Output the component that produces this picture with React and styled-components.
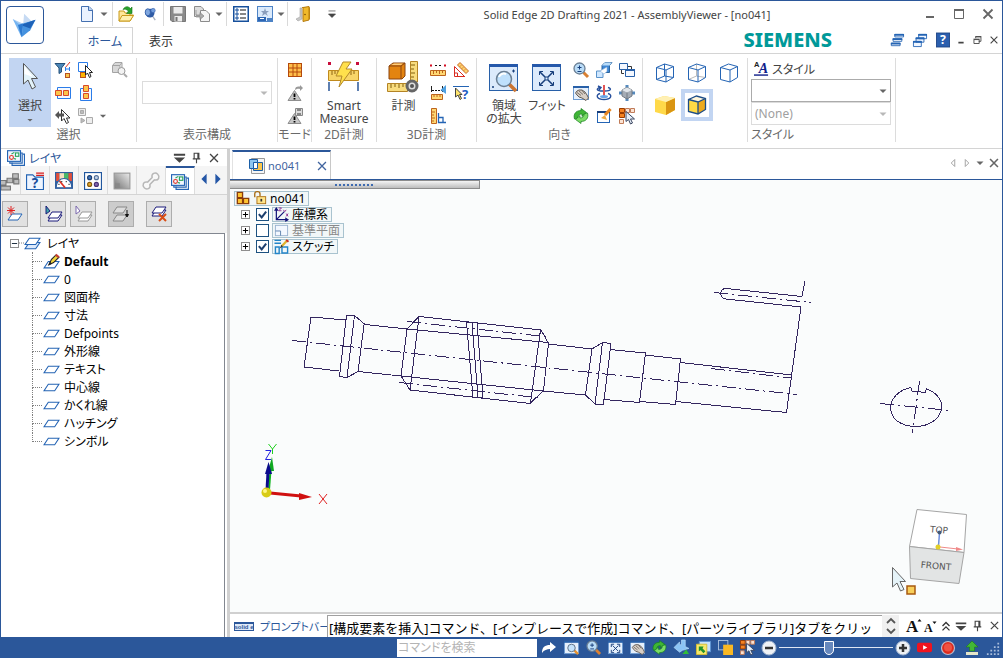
import { useState } from "react";
import styled, { createGlobalStyle, css } from "styled-components";

const GlobalStyle = createGlobalStyle`
*, *::before, *::after {
    box-sizing: border-box;
}
body {
    margin: 0;
    background: #fff;
}
body, button, input, select {
    font-family: "Noto Sans", "Noto Sans CJK JP", sans-serif;
    font-size: 12px;
    color: #444;
}
button {
    background: none;
    border: 0;
    padding: 0;
    font-feature-settings: inherit;
    cursor: pointer;
}
svg {
    display: block;
    flex: none;
    overflow: visible;
}
`;

const Window = styled.div`
display: flex;
flex-direction: column;
height: 100vh;
border: 1px solid #2b579a;
border-bottom: 0;
overflow: hidden;
font-feature-settings: "palt";
`;

const Header = styled.header`
display: flex;
flex: none;
height: 53px;
border-bottom: 1px solid #d4d4d4;
`;

const AppButton = styled.button`
flex: none;
display: flex;
align-items: center;
justify-content: center;
width: 38px;
height: 38px;
margin: 5px 33px 0 5px;
border: 1px solid #2b579a;
border-radius: 4px;
`;

const HeaderRows = styled.div`
flex: 1;
min-width: 0;
display: flex;
flex-direction: column;
`;

const TitleRow = styled.div`
display: flex;
align-items: center;
height: 27px;
`;

const Title = styled.h1`
flex: 1;
margin: 0;
padding-right: 8px;
text-align: center;
font: 400 11px "Noto Sans", sans-serif;
white-space: nowrap;
`;

const TabRow = styled.div`
display: flex;
align-items: center;
height: 26px;
`;

const RibbonTab = styled.button`
width: 56px;
height: 26px;
color: #333;
border: 1px solid transparent;
border-bottom: 0;
${p => p.$active && css`
    color: #2b579a;
    background: #fff;
    border-color: #d4d4d4;
`}
`;

const Brand = styled.div`
margin-left: auto;
margin-right: 53px;
font: 800 20px/24px "Noto Sans", sans-serif;
color: #009999;
`;

// a flat icon button, only the width differs from place to place
const Slot = styled.button`
flex: none;
display: flex;
align-items: center;
justify-content: center;
width: ${p => p.$w || 23}px;
height: ${p => p.$h || 23}px;
`;

const Divider = styled.span`
flex: none;
width: 1px;
height: 24px;
margin: 0 1px;
background: #d9d9d9;
`;

const Ribbon = styled.div`
flex: none;
display: flex;
height: 95px;
padding: 4px 0 6px;
border-bottom: 1px solid #d4d4d4;
`;

const Group = styled.section`
flex: none;
display: flex;
flex-direction: column;
width: ${p => p.$w}px;
padding-left: ${p => p.$pad || 0}px;
border-right: 1px solid #dcdcdc;
`;

const GroupBody = styled.div`
display: flex;
justify-content: ${p => p.$center ? "center" : "flex-start"};
align-items: ${p => p.$center ? "center" : "stretch"};
height: 69px;
`;

const GroupLabel = styled.div`
height: 15px;
margin-left: -${p => p.$pull || 0}px;
line-height: 15px;
text-align: ${p => p.$left ? "left" : "center"};
white-space: nowrap;
color: #6a6a6a;
`;

const BigButton = styled.button`
display: flex;
flex-direction: column;
align-items: center;
width: ${p => p.$w}px;
height: 69px;
padding-top: 2px;
line-height: 13px;
white-space: nowrap;
background: ${p => p.$on ? "#c2d5f2" : "none"};
span {
    margin-top: 5px;
}
span + svg {
    margin-top: 2px;
}
`;

const IconGrid = styled.div`
display: grid;
grid-template-columns: ${p => p.$cols};
grid-auto-rows: 23px;
`;

const ViewGrid = styled.div`
display: grid;
grid-template-columns: repeat(3, 32px);
grid-template-rows: 30px 34px;
align-items: center;
`;

const ViewButton = styled(Slot)`
width: 32px;
height: 32px;
border: ${p => p.$on ? "4px solid #c2d5f2" : "0"};
`;

const StyleColumn = styled.div`
display: flex;
flex-direction: column;
width: 140px;
`;

const StyleName = styled.div`
display: flex;
align-items: center;
gap: 3px;
height: 21px;
padding-left: 3px;
`;

const Combo = styled.div`
display: grid;
width: ${p => p.$w}px;
height: 23px;
select, svg {
    grid-area: 1 / 1;
}
select {
    appearance: none;
    width: 100%;
    height: 23px;
    padding: 0 3px;
    border: 1px solid ${p => p.$dim ? "#dcdcdc" : "#ababab"};
    border-radius: 0;
    background: #fff;
    color: ${p => p.$dim ? "#a0a0a0" : "#333"};
    opacity: 1;
}
svg {
    place-self: center end;
    pointer-events: none;
}
`;

const Workspace = styled.div`
flex: 1;
min-height: 0;
display: flex;
`;

const SidePanel = styled.aside`
flex: none;
display: flex;
flex-direction: column;
width: 229px;
border-right: 3px solid #d0d0d0;
`;

const PanelTitle = styled.div`
display: flex;
align-items: center;
height: 17px;
padding: 0 5px 0 6px;
color: #2b579a;
b {
    flex: 1;
    margin-left: 4px;
    font-weight: 400;
}
`;

const PanelTabs = styled.div`
display: flex;
height: 29px;
border-bottom: 1px solid #d4d4d4;
background: #f5f5f5;
overflow: hidden;
`;

const PanelTab = styled(Slot)`
width: 29px;
height: 29px;
border-right: 1px solid #dcdcdc;
${p => p.$first && css`
    width: 20px;
`}
${p => p.$active && css`
    background: #fff;
    border-top: 2px solid #2b579a;
`}
`;

const PanelTools = styled.div`
display: flex;
align-items: center;
height: 38px;
padding: 0 1px;
background: #f0f0f0;
`;

const ToolButton = styled(Slot)`
width: 26px;
height: 26px;
margin-right: ${p => p.$gap}px;
border: 1px solid #adadad;
background: ${p => p.$off ? "#cccccc" : "#e1e1e1"};
`;

const Tree = styled.ul`
flex: 1;
margin: 0 2px 0 0;
padding: 0 0 0 9px;
list-style: none;
border: 1px solid #828790;
border-bottom: 0;
border-left: 0;
color: #000;
ul {
    margin: 0;
    padding: 0 0 0 22px;
    list-style: none;
}
`;

const TreeRow = styled.div`
display: flex;
align-items: center;
height: 18px;
svg + svg {
    margin-right: 6px;
}
`;

const TreeLeaf = styled.li`
display: flex;
align-items: center;
height: 18px;
font-weight: ${p => p.$bold ? 700 : 400};
&::before {
    content: "";
    align-self: flex-start;
    width: 10px;
    height: 10px;
    margin-right: 1px;
    border: 0 dotted #808080;
    border-width: 0 0 1px 1px;
}
&:not(:last-child) {
    background: repeating-linear-gradient(#808080 0 1px, #fff 1px 2px) no-repeat 0 100% / 1px 8px;
}
svg {
    margin-right: 4px;
}
`;

const Main = styled.main`
flex: 1;
min-width: 0;
display: flex;
flex-direction: column;
`;

const DocTabs = styled.div`
display: flex;
align-items: flex-end;
height: 31px;
padding-left: 2px;
border-bottom: 1px solid #2b579a;
`;

const DocTab = styled.div`
display: flex;
align-items: center;
width: 99px;
height: 29px;
padding: 0 1px 0 16px;
border-top: 2px solid #2b579a;
border-right: 1px solid #c8c8c8;
border-left: 1px solid #e2e2e2;
font-size: 11px;
color: #41649f;
span {
    flex: 1;
    margin-left: 3px;
}
`;

const DocTools = styled.div`
display: flex;
align-items: center;
height: 29px;
margin-left: auto;
padding-bottom: 4px;
`;

const Canvas = styled.div`
position: relative;
flex: 1;
min-height: 0;
overflow: hidden;
background: #fafcfc;
border-bottom: 2px solid #d0d0d0;
`;

const Scene = styled.svg`
position: absolute;
left: 0;
top: 0;
`;

const Splitter = styled.div`
position: relative;
display: flex;
align-items: center;
justify-content: center;
width: 250px;
height: 9px;
border: 1px solid #8c8c8c;
border-left: 0;
background: linear-gradient(#f4f4f4, #bdbdbd);
`;

const PathFinder = styled.div`
position: relative;
padding: 1px 4px;
color: #000;
`;

const PathRow = styled.div`
display: flex;
align-items: center;
height: 16px;
padding-left: ${p => p.$root ? 0 : 7}px;
`;

const Check = styled.span`
display: grid;
margin: 0 3px 0 6px;
input, svg {
    grid-area: 1 / 1;
}
input {
    appearance: none;
    width: 13px;
    height: 13px;
    margin: 0;
    border: 1px solid #1c5180;
    background: #fff;
}
svg {
    pointer-events: none;
}
`;

const PathLabel = styled.label`
display: flex;
align-items: center;
gap: 3px;
height: 15px;
padding: 0 3px 0 1px;
border: 1px solid #a9c3cf;
background: #f2f7f8;
color: ${p => p.$off ? "#8a8a8a" : "#000"};
white-space: nowrap;
`;

const Expander = styled.button`
display: flex;
align-items: center;
justify-content: center;
width: 9px;
height: 9px;
border: 1px solid #8e8e8e;
background: #fff;
`;

const PromptBar = styled.div`
flex: none;
display: flex;
align-items: center;
height: 23px;
padding-left: 4px;
color: #2b579a;
label {
    flex: none;
    width: 67px;
    margin-left: 5px;
    font-size: 11px;
    white-space: nowrap;
}
`;

const PromptText = styled.input`
flex: 1;
min-width: 0;
height: 22px;
padding: 3px 1px 0;
border: 1px solid #a0a0a0;
border-right: 0;
border-bottom: 0;
background: #fff;
font-size: 13px;
color: #000;
`;

const Spinner = styled(Slot)`
width: 17px;
height: 22px;
background: #f0f0f0;
margin-right: 6px;
`;

const StatusBar = styled.footer`
flex: none;
display: flex;
align-items: center;
justify-content: flex-end;
height: 21px;
background: #2b579a;
`;

const Search = styled.input`
width: 140px;
height: 18px;
padding: 0 1px;
border: 0;
font-feature-settings: inherit;
&::placeholder {
    color: #b4b4b4;
    opacity: 1;
}
`;

const Zoom = styled.input`
appearance: none;
width: 114px;
height: 18px;
margin: 0;
background: linear-gradient(#dfe7f3, #dfe7f3) center / 100% 1px no-repeat;
&::-webkit-slider-thumb {
    appearance: none;
    width: 10px;
    height: 14px;
    border: 1px solid #fff;
    border-radius: 0 0 5px 5px;
    background: #6688bd;
}
`;

const blue = "#2464b4";
const navy = "#1b1b7a";
const gold = "#fbc54b";

const sheet = (x, y, fill = "#fff", stroke = blue) => (
    <path d={`M${x + 4} ${y}H${x + 14}L${x + 10} ${y + 6}H${x}Z`} fill={fill} stroke={stroke}/>
);
const lens = (
    <>
        <path d="M10.500 10.500L15 15" stroke="#d98033" strokeWidth="3"/>
        <circle cx="6.500" cy="6.500" r="5.500" fill="#b9dcf8" stroke="#6b7f94" strokeWidth="1.300"/>
    </>
);
const pageFrame = (
    <>
        <rect x=".5" y="1.500" width="15" height="13" fill="#e6f0fc" stroke="#6f9cd2"/>
        <path d="M0 2H16" stroke="#2860a8" strokeWidth="2"/>
    </>
);
const layers = (
    <>
        <path d="M4.500 12V14.500H15.500V4.500H14" fill="none" stroke={blue}/>
        <path d="M2.500 11V12.500H13.500V3.500H12" fill="none" stroke={blue}/>
        <rect x=".5" y="1.500" width="11.500" height="9.500" fill="#f1f7ff" stroke={blue}/>
        <circle cx="4" cy="7.500" r="1.700" fill="none" stroke="#e0382b"/>
        <rect x="7.500" y="3.500" width="3" height="3" fill="none" stroke="#2aa35a"/>
        <path d="M4 4.500L6.500 3M6 8.500L8 9" stroke="#2aa35a"/>
    </>
);
const warn = <path d="M7.500 5.500L14 15.500H1Z" fill="#c6c6c6" stroke="#8e8e8e"/>;
const bang = <path d="M7.500 8.500V12M7.500 13V14.500" stroke="#000" strokeWidth="1.800"/>;
const cubeLines = "M1.500 4.500L9.500 1 18.500 3.500V14.500L11 19 1.500 16.500ZM1.500 4.500L11 7 18.500 3.500M11 7V19";

// 16 x 16 drawings, the big ribbon ones use their own box
const art = {
    doc: <><path d="M2.500 .5H10L13.500 4V15.500H2.500Z" fill="#eaf2ff" stroke="#4470b0"/><path d="M9.500 .5V4.500H13.500" fill="#bcd3f2" stroke="#4470b0"/></>,
    caret: <path d="M4.500 6.500H11.500L8 10Z" fill="#666"/>,
    caretDim: <path d="M4.500 6.500H11.500L8 10Z" fill="#b8b8b8"/>,
    overflow: <path d="M4 4.500H12M4 8H12L8 12Z" fill="#444" stroke="#444" strokeWidth=".8"/>,
    open: <><path d="M1 15V5H6L7 7H12V9H15.500L12 15Z" fill="#ffe79a" stroke="#c99a1b"/><path d="M1 15L4 9.500H15.500L12 15Z" fill="#fff0b0" stroke="#c99a1b"/><path d="M5 3.500C7 0 10 0 12.500 2.500L14 1V7.500H8.500L10.500 5C8 3 7 3 5 3.500Z" fill="#27a22c" stroke="#147418" strokeWidth=".6"/></>,
    pinBlue: <><path d="M10 9L14 15" stroke="#a8b2c2" strokeWidth="1.500"/><circle cx="8" cy="7" r="5" fill="#2f5ba5"/><ellipse cx="5.500" cy="6" rx="3" ry="4" fill="#7fa6de" stroke="#2f5ba5"/><circle cx="11.500" cy="4" r="2.500" fill="#6f9bdb" stroke="#2f5ba5" strokeWidth=".6"/></>,
    save: <><path d="M.5 .5H15.500V15.500H2L.5 14Z" fill="#8b8b8b" stroke="#777"/><path d="M3.500 1H12.500V7.500H3.500ZM4.500 10H12V15.500H4.500Z" fill="#ececec"/><path d="M6.500 11V15" stroke="#777" strokeWidth="2"/></>,
    copy: <><path d="M.5 .5H7L9.500 3V10.500H.5Z" fill="#ddd" stroke="#8b8b8b"/><path d="M6.500 4.500H12L15.500 8V15.500H6.500Z" fill="#f4f4f4" stroke="#8b8b8b"/><path d="M2 4V9H6V6.500L10 10 6 13.500V11H2" fill="#aaa" stroke="#777" strokeWidth=".6"/></>,
    list: <><rect x=".75" y=".75" width="14.500" height="14.500" fill="#fff" stroke="#17509c" strokeWidth="1.500"/><path d="M7 4H13M7 8H13M7 12H13" stroke="#111"/><path d="M3 3H5V5H3ZM3 7H5V9H3ZM3 11H5V13H3Z" fill="#fff" stroke="#17509c"/></>,
    picture: <><rect x=".5" y=".5" width="15" height="15" fill="#dbeafb" stroke="#4d83c6"/><path d="M8 2L9 5H12L9.500 7 11 10 8 8 5 10 6 7 4 5H7Z" fill="#8b9ebc"/><path d="M1 11H9V15H1Z" fill="#2d66b4"/><path d="M3 12.500H7M11 13H14" stroke="#fff"/><path d="M10 12H15V15H10Z" fill="#4d83c6"/></>,
    door: <><path d="M1 13L5 11V2H7V13L3 15Z" fill="#c8c8c8" stroke="#a1a1a1" strokeWidth=".6"/><path d="M7 1.500H14.500V13H12" fill="#fff" stroke="#c58c12"/><path d="M8 1.500L14 .5V14L8 15.500Z" fill="#f0b92b" stroke="#b57b10"/><circle cx="10" cy="8.500" r=".8" fill="#7a4c00"/></>,
    min: <path d="M4 11H12" stroke="#666" strokeWidth="2"/>,
    max: <><path d="M3.500 3.500H12.500V12.500H3.500Z" fill="none" stroke="#666"/><path d="M3 4H13" stroke="#666" strokeWidth="2"/></>,
    close: <path d="M3.500 3.500L12.500 12.500M12.500 3.500L3.500 12.500" stroke="#666" strokeWidth="1.800"/>,
    closeSm: <path d="M3.500 3.500L12.500 12.500M12.500 3.500L3.500 12.500" stroke="#444" strokeWidth="1.500"/>,
    closeTab: <path d="M3.500 3.500L12.500 12.500M12.500 3.500L3.500 12.500" stroke="#41649f" strokeWidth="1.500"/>,
    minSm: <path d="M5 11H11" stroke="#444" strokeWidth="2"/>,
    restore: <path d="M6.500 6V4.500H12.500V9.500H10M4.500 7.500H10.500V12H4.500ZM4 7H11M6 4H13" fill="none" stroke="#444"/>,
    cascade: <><path d="M5.500 1.500H15.500V4.500H5.500ZM3.500 6.500H13.500V9.500H3.500ZM1.500 11.500H11.500V14.500H1.500Z" fill="#fff" stroke={blue}/><path d="M5 2H16M3 7H14M1 12H12" stroke={blue} strokeWidth="2"/></>,
    windows: <><path d="M6.500 1.500H15.500V6.500H6.500ZM3.500 5.500H12.500V10.500H3.500ZM.5 9.500H9.500V15.500H.5Z" fill="#f0f6ff" stroke={blue}/><path d="M6 2H16M3 6H13M0 10H10" stroke={blue} strokeWidth="2"/></>,
    help: <><rect x=".5" y="0" width="15" height="16" fill="#2b5fae" stroke="#1d4485"/><text x="8" y="13" textAnchor="middle" fontFamily="Noto Sans" fontWeight="700" fontSize="14" fill="#fff">?</text></>,
    filter: <><path d="M0 1.500H10L6.500 6V10L4 11.500V6Z" fill="#4b87b9" stroke="#27517a"/><path d="M10 6L15 0" stroke="#df3324"/><path d="M10.500 5V9M14.500 5V9M10.500 7H14.500" stroke="#2b7ce9"/><rect x="10.500" y="11.500" width="4" height="4" fill={gold} stroke="#b75323"/></>,
    pickBox: <><path d="M.5 .5H9.500V9.500H.5Z" fill="#fff" stroke="#2b7ce9"/><rect x="2.500" y="10.500" width="5" height="5" fill="#ffb400" stroke="#b75323"/><path d="M7.500 3.500V13L9.500 11 11.500 15.500 13 14.500 11.500 10.500H14.500Z" fill="#fff" stroke="#222"/></>,
    boxesH: <><path d="M2.500 2.500H15.500V13.500H2.500Z" fill="#f5f9ff" stroke="#2b7ce9"/><path d="M.5 5.500H6.500V10.500H.5ZM8.500 5.500H13.500V10.500H8.500Z" fill={gold} stroke="#d8492b"/></>,
    boxesV: <><path d="M2.500 3.500H13.500V15.500H2.500Z" fill="#f5f9ff" stroke="#2b7ce9"/><path d="M5.500 .5H10.500V6.500H5.500ZM5.500 8.500H10.500V13.500H5.500Z" fill={gold} stroke="#d8492b"/></>,
    pickBack: <><path d="M6.500 1.500V13L9 10.500 11.500 15.500 13.500 14.500 11.500 10H15Z" fill="#fff" stroke="#333"/><path d="M0 7L4 3V5.500H9V8.500H4V11Z" fill="#555"/></>,
    chain: <><path d="M.5 .5H7.500V7.500H.5ZM8.500 9.500H14.500V15.500H8.500Z" fill="#eee" stroke="#aaa"/><path d="M2.500 2.500H5.500V5.500H2.500ZM3 10L7 12.500 3 15Z" fill="#bbb" stroke="#aaa"/></>,
    findPart: <><path d="M.5 3.500L3 .5H10L8 3.500V10.500H.5ZM.5 3.500H8M8 10L10 8V1" fill="#d8d8d8" stroke="#a4a4a4"/><circle cx="9.500" cy="9" r="3.500" fill="#f3f3f3" stroke="#999"/><path d="M12 12L15 15" stroke="#aaa" strokeWidth="2"/></>,
    gridRed: <><rect x="1.500" y="1.500" width="13" height="13" fill="#ffbd4a" stroke="#b4490d"/><path d="M1 6H15M1 10H15M6 1V15M10 1V15" stroke="#b4490d"/></>,
    warnArrow: <>{warn}{bang}<path d="M8 5C8 2 10 1 13 1.500V0L16 3 13 6V4C11 3.500 10 4 8 5Z" fill="#999"/></>,
    warnSave: <>{warn}{bang}<path d="M8.500 .5H15.500V7.500H8.500Z" fill="#ddd" stroke="#888"/><path d="M10 5H14V7H10ZM10 1H14V3H10Z" fill="#888"/></>,
    rulerDots: <><path d="M.5 8.500H15.500V13.500H.5Z" fill="#ffd873" stroke="#bd641d"/><path d="M3.500 9V12M6.500 9V11M9.500 9V12M12.500 9V11" stroke="#bd641d"/><path d="M0 3.500H2M14 3.500H16" stroke="#d60d22" strokeWidth="2"/><path d="M5 3.500H7M9 3.500H11" stroke="#111"/></>,
    angle: <><path d="M4.500 3L7 .5 15.500 9 13 11.500Z" fill="#ffd26e" stroke="#c76a25"/><path d="M7 4.500L8 3.500M9 6.500L10 5.500M11 8.500L12 7.500" stroke="#b85a18"/><path d="M1.500 4.500V14.500H12M1.500 4.500L11 14M1.500 11H4.500V14" fill="none" stroke="#d92b20"/></>,
    rulerArrow: <><path d="M1.500 9.500H12.500V14.500H1.500Z" fill="#ffd873" stroke="#bd641d"/><path d="M4 10V12M7 10V12M10 10V12" stroke="#bd641d"/><path d="M1.500 1V7M12.500 1V7" stroke="#222"/><path d="M2 5.500H12" stroke="#111" strokeDasharray="2 1"/><path d="M16 0V9L10.500 5Z" fill="#50a1e2"/></>,
    whatsThis: <><path d="M0 1.500H16" stroke={blue}/><path d="M2.500 3V12L5 10 7 14.500 8.500 13.500 6.500 9.500H9Z" fill="#ffe56b" stroke="#444"/><text x="9" y="14" fontFamily="Noto Sans" fontWeight="700" fontSize="13" fill="#1e5cc3">?</text></>,
    rulerL: <><path d="M1.500 .5H6.500V15.500H1.500Z" fill="#ffd873" stroke="#bd641d"/><path d="M2 4H5M2 7H4M2 10H5M2 13H4" stroke="#bd641d"/><path d="M8.500 5V14.500H16M8.500 9.500H13V14" fill="none" stroke={blue} strokeWidth="1.300"/></>,
    zoomPm: <>{lens}<path d="M4.500 5.500H8.500M6.500 3.500V7.500M4.500 9.500H8.500" stroke="#173e7b"/></>,
    orient: <><path d="M6 3.500L9 .5H16L13.500 3.500V10.500H6Z" fill="#3f87d4" stroke="#2c659f"/><path d="M6 3.500L9 .5H16L13.500 3.500Z" fill="#b9dcf8"/><path d="M.5 9H7V15.500H.5Z" fill="#cfe7ff" stroke="#5a93ca"/><path d="M4 9L11 5V9.500L8 12Z" fill="#fff" stroke="#8ab4dd" strokeWidth=".6"/></>,
    swapWin: <><path d="M.5 1.500H8.500V7.500H.5ZM6.500 7.500H15.500V14.500H6.500Z" fill="#f4f8ff" stroke="#2860a8"/><path d="M6 8H16" stroke="#2860a8" strokeWidth="2"/><path d="M9 4.500H12.500V7M5 11.500H2.500V8" fill="none" stroke="#333"/></>,
    hand: <>{pageFrame}<path d="M2.500 8L4 6 6 5 9 5 12 7 14 10 15.500 13 13 15.500 9 13 6 12 4 10Z" fill="#d8cfc6" stroke="#625b55"/><path d="M4 7.500L8 10.500M6 6L10 9.500M9 5.500L12 9" stroke="#625b55" strokeWidth=".8"/></>,
    spin: <><path d="M8 0V13" stroke="#d91c1c" strokeWidth="1.500"/><path d="M12 2.500C16 3.500 15 6 9 6M7 6C0 6 0 3.500 4 2.500M2 1L5 2.500 3 5M4 8.500C-1 10 1 14.500 8 14.500S17 10 12 8.500" fill="none" stroke="#264f9c" strokeWidth="1.400"/><ellipse cx="8" cy="11.500" rx="4" ry="1.500" fill="#6aa5e8"/></>,
    cubeGray: <><path d="M8 0V3M8 13V16M0 8H3M13 8H16" stroke="#5589bd" strokeWidth="3"/><path d="M3 5L8 2.500 13 5V11L8 14 3 11Z" fill="#a5acb5" stroke="#747b83"/><path d="M3 5L8 7.500 13 5L8 2.500Z" fill="#e2e6ea"/><path d="M8 7.500V14" stroke="#747b83"/></>,
    recycle: <><path d="M1.500 11C0 6 3 2.500 8 2.500V.5L13.500 4.500 9 8.500V6C6 6 5 7.500 5 10Z" fill="#3fb535" stroke="#137d1b" strokeWidth=".7"/><path d="M14.500 5C16 10 13 13.500 8 13.500V15.500L2.500 11.500 7 7.500V10C10 10 11 8.500 11 6Z" fill="#7bdb66" stroke="#137d1b" strokeWidth=".7"/></>,
    sketchBox: <><rect x="1.500" y="3.500" width="12" height="11" fill="#fff" stroke={blue}/><path d="M1 4H14" stroke="#173e7b" strokeWidth="2"/><path d="M14.500 1L9 7" stroke="#e78620" strokeWidth="3"/><path d="M5 10L11 12 9 7Z" fill="#efab45"/></>,
    pickSet: <><path d="M.5 .5H5.500V4.500H.5ZM.5 5.500H5.500V9.500H.5Z" fill="#f58220" stroke="#9b3c00"/><path d="M6.500 .5H10.500V4.500H6.500ZM11.500 .5H15.500V4.500H11.500ZM.5 11.500H4.500V15.500H.5Z" fill="#fbe3d3" stroke="#c07b58"/><path d="M7 3.500V13.500L9.500 11.500 11.500 16 13.500 15 11.500 11H15.500Z" fill="#e8f0fa" stroke="#3b4660"/></>,
    fit: <>{pageFrame}<path d="M5 6L11 12M11 6L5 12M3.500 7.500V4.500H6.500M9.500 4.500H12.500V7.500M12.500 10.500V13.500H9.500M6.500 13.500H3.500V10.500" fill="none" stroke="#173e7b"/></>,
    zoomArea: <>{pageFrame}<path d="M11 11L15 15" stroke="#e69230" strokeWidth="2.500"/><circle cx="8" cy="8.500" r="4" fill="#c5e3fc" stroke="#5a6d82"/></>,
    styleA: <><text x="0" y="6" fontFamily="Liberation Sans" fontWeight="700" fontSize="8" fill="#222">A</text><text x="5" y="13" fontFamily="Liberation Serif" fontStyle="italic" fontWeight="700" fontSize="15" fill="#10208a">A</text><path d="M0 15H15" stroke="#10208a" strokeWidth="1.500"/></>,
    layers,
    menu: <path d="M2 4H14V6H2ZM2 8H14L8 13.500Z" fill="#444"/>,
    pin: <path d="M5.500 3.500H10.500V9.500H5.500ZM9.500 3V9M4 9.500H12M8 10V14" fill="none" stroke="#444" strokeWidth="1.200"/>,
    blocks: <path d="M9.500 1.500H14.500V5.500H9.500ZM4.500 5.500H9.500V9.500H4.500ZM10.500 6.500H15V10.500H10.500ZM-2 7.500H3.500V11.500H-2ZM-1 12.500H7.500V16H-1Z" fill="#bcbcbc" stroke="#777"/>,
    folderQ: <><path d="M.5 2.500H6L8 4.500H15.500V15.500H.5Z" fill="#eef5ff" stroke={blue}/><path d="M9 1H16M9 3H16" stroke="#d81e1e"/><text x="8" y="14.500" textAnchor="middle" fontFamily="Noto Sans" fontWeight="700" fontSize="12" fill="#174d9c">?</text></>,
    gauge: <><path d="M0 0H16V15H0Z" fill="#315f9f"/><path d="M1 1H4V8H1Z" fill="#e54e38"/><path d="M4 1H8V8H4Z" fill="#f5dfc0"/><path d="M8 1H12V8H8Z" fill="#48b968"/><path d="M12 1H15V8H12Z" fill="#e54e38"/><path d="M1 14C1 3 15 3 15 14Z" fill="#fff" stroke="#315f9f"/><path d="M4 8L9 14" stroke="#df2d20" strokeWidth="1.500"/><path d="M3 11H4M6 8V9M10 8V9M12 11H13" stroke="#333"/></>,
    balls: <><rect x=".5" y=".5" width="15" height="15" fill="#fff" stroke="#21579e"/><circle cx="5" cy="5" r="1.800" fill="#4377bc" stroke="#1b3e72"/><circle cx="11" cy="5" r="1.800" fill="#c8d6ea" stroke="#506f99"/><circle cx="5" cy="11" r="1.800" fill="#e4a52c" stroke="#855c0e"/><circle cx="11" cy="11" r="1.800" fill="#8268ad" stroke="#493176"/></>,
    shade: <><defs><linearGradient id="shade" x1="0" y1="1" x2="1" y2="0"><stop offset=".1" stopColor="#7d7d7d"/><stop offset="1" stopColor="#ececec"/></linearGradient></defs><rect x="1" y="1" width="14" height="14" fill="url(#shade)" stroke="#999"/><path d="M2 10H6V14H2Z" fill="#888"/></>,
    wrench: <path d="M5 9C1 8 0 12 2 14S8 15 7 11L11 7C15 8 16 4 14 2S8 1 9 5Z" fill="#f8f8f8" stroke="#b7b7b7" strokeWidth="1.300"/>,
    left: <path d="M11 2V14L5 8Z" fill="#2456a6"/>,
    right: <path d="M5 2V14L11 8Z" fill="#2456a6"/>,
    newLayer: <>{sheet(1, 8)}<path d="M4 0V9M0 4.500H8M1 1.500L7 7.500M7 1.500L1 7.500" stroke="#df2020"/></>,
    moveLayer: <>{sheet(3, 9, "#fff", navy)}{sheet(3, 6, "#fff", navy)}<path d="M1 0V8L5 5Z" fill="#3ca6a6" stroke={navy}/></>,
    showLayer: <>{sheet(3, 9, "#fff", "#999")}{sheet(3, 6, "#fff", "#999")}<path d="M1 0V8L5 5Z" fill="#fff" stroke="#7a68ad"/></>,
    orderLayer: <>{sheet(0, 1, "#ddd", "#888")}{sheet(0, 9, "#ddd", "#888")}<path d="M14 4V9M12.500 8.500H15.500L14 11Z" stroke="#111" fill="#111"/></>,
    dropLayer: <>{sheet(1, 4, "#fff", navy)}{sheet(1, 1, "#fff", navy)}<path d="M8 8L15 15M15 8L8 15" stroke="#d94e16" strokeWidth="2"/></>,
    stack: <>{sheet(1, 7, "#dce9fb")}{sheet(1, 3)}</>,
    sheet: sheet(1, 5),
    sheetPen: <>{sheet(1, 8)}<path d="M5.500 11L8 6 12 2 15 4 10 9Z" fill="#f2d43c" stroke="#222"/><path d="M5 12L8.500 10 6.500 8Z" fill="#222"/><path d="M12 1.500L15 4" stroke="#c73d30" strokeWidth="2"/></>,
    asmDoc: <><path d="M2.500 .5H15.500V15.500H2.500Z" fill="#f5f5f5" stroke="#999"/><path d="M.5 1.500H8.500V10.500H.5Z" fill="#8ec6ef" stroke="#1a5ea7"/><path d="M4.500 4.500H13.500V12.500H4.500Z" fill={gold} stroke="#1a5ea7"/><path d="M4.500 4.500H8.500V10.500H4.500Z" fill="#fff" stroke="#1a5ea7"/></>,
    prev: <path d="M10 4V12L6 8Z" fill="#fff" stroke="#999"/>,
    next: <path d="M6 4V12L10 8Z" fill="#fff" stroke="#999"/>,
    asm: <path d="M1.500 1.500H7.500V7.500H1.500ZM1.500 8.500H7.500V14.500H1.500ZM8.500 8.500H14.500V14.500H8.500Z" fill="#ffc431" stroke="#8a3c0a" strokeWidth="1.500"/>,
    lock: <><path d="M2 7V3C2 0 8 0 8 3V6" fill="none" stroke="#a8690e" strokeWidth="1.500"/><rect x="4.500" y="6.500" width="10" height="8" fill="#ffe48a" stroke="#a8690e"/><path d="M9.500 9V12" stroke="#333" strokeWidth="2"/></>,
    plus: <path d="M2 8H14M8 2V14" stroke="#000" strokeWidth="2.300"/>,
    minus: <path d="M2 8H14" stroke="#234" strokeWidth="2.300"/>,
    tick: <path d="M3.500 7.500L7 11.500 12.500 4.500" fill="none" stroke="#1d3f6e" strokeWidth="2.500"/>,
    csys: <><path d="M2.500 1V13.500H15M2.500 13.500L11 5" fill="none" stroke="#14147a" strokeWidth="1.300"/><path d="M0 4L2.500 0 5 4ZM12 11L16 13.500 12 16Z" fill="#14147a"/><path d="M5 1H8L5 4H8M10 3L11.500 5 13 3M13 7L15 10M15 7L13 10" fill="none" stroke="#8d2f91"/></>,
    plane: <><rect x="1.500" y="2.500" width="13" height="11" fill="#f3f8ff" stroke="#9ab3d1"/><path d="M1.500 8.500H7V13.500" fill="none" stroke="#5e81ad"/></>,
    sketch: <><path d="M.5 1.500H7.500M.5 4.500H7.500M1.500 8.500H5.500V15.500H1.500ZM8.500 8.500H14.500V15H8.500Z" fill="none" stroke="#2485c8" strokeWidth="1.500"/><path d="M14.500 1L8 8" stroke="#e2b22b" strokeWidth="2.500"/><path d="M8 6L6 10 9.500 8Z" fill="#333"/><path d="M13 1L15.500 3" stroke="#cc3025" strokeWidth="2"/></>,
    updown: <path d="M4 5L8 1 12 5M4 11L8 15 12 11" fill="none" stroke="#555" strokeWidth="1.800"/>,
    bigA: <><text x="0" y="14" fontFamily="Liberation Serif" fontWeight="700" fontSize="17" fill="#111">A</text><path d="M11.500 3.500H15.500L13.500 1Z" fill="#111"/></>,
    smallA: <><text x="1" y="14" fontFamily="Liberation Serif" fontWeight="700" fontSize="12" fill="#111">A</text><path d="M9.500 3.500H13.500L11.500 6Z" fill="#111"/></>,
    chevrons: <path d="M4 8L8 4 12 8M4 13L8 9 12 13" fill="none" stroke="#333" strokeWidth="1.500"/>,
    redo: <path d="M1 13C1 7 4 5 9 5V2L15 7 9 12V9C6 9 3 10 1 13Z" fill="#fff"/>,
    turn: <><path d="M0 8L6 2V5H8V0H12V7L16 9 9 11 6 13Z" fill="#8cc4f5" stroke="#b8dcfa" strokeWidth=".7"/><path d="M9 15H16L13 10Z" fill="#31bd38"/></>,
    sheetsIn: <><path d="M3.500 1.500H15.500V12.500H3.500Z" fill="#c8e1fb" stroke="#5c93d2"/><path d="M.5 4.500H11.500V15.500H.5Z" fill="#f6e86c" stroke="#d8be31"/><path d="M3 7H8L7 9 10 12 8 14 5 11 3 12Z" fill="#23932d"/></>,
    overlap: <><rect x=".5" y=".5" width="10" height="10" fill="none" stroke="#aac1df"/><rect x="5.500" y="5" width="10.500" height="11" fill="#f9b824"/></>,
    zoomOut: <><circle cx="8" cy="8" r="7" fill="#eef1f5" stroke="#9bb0cd"/><path d="M4 8H12" stroke="#333" strokeWidth="2.500"/></>,
    zoomIn: <><circle cx="8" cy="8" r="7" fill="#eef1f5" stroke="#9bb0cd"/><path d="M4 8H12M8 4V12" stroke="#333" strokeWidth="2.500"/></>,
    video: <><rect x="0" y="3" width="16" height="10" rx="2" fill="#f0131e"/><path d="M6.500 5.500V10.500L11 8Z" fill="#fff"/></>,
    record: <><circle cx="8" cy="8" r="6.500" fill="#dd2a1d" stroke="#b7b9cc" strokeWidth="1.200"/><circle cx="8" cy="7.500" r="4" fill="#ef5142"/></>,
    upload: <><path d="M8 1L14 7H10.500V11H5.500V7H2Z" fill="#43b735" stroke="#1f7e18" strokeWidth=".6"/><path d="M2 12H14V15H2Z" fill="#e5e5c9"/></>,
    grip: <path d="M13 2H15V4H13ZM9 6H11V8H9ZM13 6H15V8H13ZM5 10H7V12H5ZM9 10H11V12H9ZM13 10H15V12H13ZM1 14H3V16H1ZM5 14H7V16H5ZM9 14H11V16H9ZM13 14H15V16H13Z" fill="#a9bddb"/>,
    logo: <g><path d="M2 9L15 15 12 30 7 15Z" fill="#a9cdf3"/><path d="M15 3L14 14 23 11Z" fill="#c6daf3"/><path d="M2 9L13 18 12 30Z" fill="#74b4f1"/><path d="M28 10L14 14 12 30 22 22Z" fill="#4592df"/><path d="M28 10L11 16 22 20Z" fill="#1e62b8"/><path d="M8 16L14 14 12 30Z" fill="#2c7ad1"/></g>,
    arrow: <><path d="M10.500 3.500V24L15 20 19 29 22.500 27 18.500 18.500H24.500Z" fill="#e3f3fa" stroke="#555"/><path d="M11.500 6V14L20 17Z" fill="#fff"/></>,
    smart: <><path d="M1.500 10.500H31.500V20.500H1.500Z" fill="#f8d568" stroke="#c08a1c"/><path d="M5 11V15M8 11V14M11 11V15M21 11V14M24 11V15M27 11V14" stroke="#8f6510"/><path d="M1 2H4V5H1ZM29 2H32V5H29Z" fill="#c80d3c"/><path d="M2 22V31M31 22V31" stroke="#1b4a91" strokeWidth="1.400"/><path d="M16 2H24L19 9H25L12 27 15 16H9Z" fill="#ffe04c" stroke="#b3882b"/></>,
    measure: <><path d="M2 6L6 3H18V16L15 19H2Z" fill="#e38410" stroke="#8b4510"/><path d="M2 6H14V19M14 6L18 3" fill="none" stroke="#8b4510"/><path d="M4 5L7 3.500H16L14 5Z" fill="#ffcd79"/><path d="M23.500 1.500H30.500V22H23.500Z" fill="#f8dc7e" stroke="#b38325"/><path d="M24 5H28M24 9H27M24 13H28M24 17H27" stroke="#82600f"/><path d="M.5 23.500H20.500V31.500H.5Z" fill="#f8dc7e" stroke="#b38325"/><path d="M4 24V28M8 24V27M12 24V28M16 24V27" stroke="#82600f"/><circle cx="25" cy="26" r="5" fill="#ddd" stroke="#666" strokeWidth="3"/><circle cx="25" cy="26" r="2" fill="#555"/></>,
    zoomBig: <><rect x="2.500" y="4.500" width="28" height="26" fill="#dceafb" stroke="#2860a8"/><path d="M2 5.500H31" stroke="#2558aa" strokeWidth="3"/><path d="M5 27H7M6 26V28M25 11H28M26.500 9.500V12.500" stroke="#173e7b"/><path d="M22 24L29 31" stroke="#cb7532" strokeWidth="3.500"/><circle cx="17" cy="19" r="7.500" fill="#bfe0fc" stroke="#6b7f94" strokeWidth="1.500"/><path d="M12 17C13 14 16 13 19 14" fill="none" stroke="#fff" strokeWidth="2"/></>,
    fitBig: <><rect x="2.500" y="4.500" width="28" height="26" fill="#dceafb" stroke="#2860a8"/><path d="M2 5.500H31" stroke="#2558aa" strokeWidth="3"/><path d="M10 12L15 17M23 12L18 17M10 25L15 20M23 25L18 20" stroke="#173e7b" strokeWidth="1.500"/><path d="M9.500 15V11.500H13M20 11.500H23.500V15M23.500 22V25.500H20M13 25.500H9.500V22M15 17H18V20H15Z" fill="none" stroke="#173e7b"/></>,
    wire: <><path d={cubeLines} fill="#fff" stroke="#2464b4"/><path d="M9.500 1V13L1.500 16.500M9.500 13L18.500 14.500" fill="none" stroke="#2464b4"/></>,
    wireGray: <><path d="M9.500 1V13L1.500 16.500M9.500 13L18.500 14.500" stroke="#bbb" fill="none"/><path d={cubeLines} fill="none" stroke="#2464b4"/></>,
    wireFront: <path d={cubeLines} fill="#fff" stroke="#2464b4"/>,
    solid: <><path d="M0 4L9 1 20 3V15L11 20 0 17Z" fill="#ffd949"/><path d="M11 7L20 3V15L11 20Z" fill="#d99512"/><path d="M0 4L9 1 20 3 11 7Z" fill="#fff0b4"/></>,
    solidEdge: <><path d="M1.500 4.500L9.500 1 18.500 3.500 11 7Z" fill="#fff6db"/><path d="M1.500 4.500L11 7V19L1.500 16.500Z" fill="#ffda45"/><path d="M11 7L18.500 3.500V14.500L11 19Z" fill="#eeaa1c"/><path d={cubeLines} fill="none" stroke="#1d4d88" strokeWidth="1.300"/></>,
    solidTag: <><rect x=".5" y="1.500" width="19" height="8" fill="#dfe9f7" stroke="#2b579a"/><path d="M0 2H20" stroke="#2b579a" strokeWidth="2"/><text x="10" y="8" textAnchor="middle" fontFamily="Liberation Sans" fontWeight="700" fontSize="6" fill="#2b579a">solid e</text></>,
};

function Icon({ name, size = 16, box = 16 }) {
    return <svg width={size} height={size} viewBox={`0 0 ${box} ${box}`} aria-hidden="true">{art[name]}</svg>
}

function Btn({ name, w, h, size }) {
    return <Slot type="button" aria-label={name} $w={w} $h={h}><Icon name={name} size={size}/></Slot>
}

function Select({ label, width, value, dim }) {
    return (
        <Combo $w={width} $dim={dim}>
            <select aria-label={label} disabled={dim}>
                <option>{value}</option>
            </select>
            <Icon name={dim ? "caretDim" : "caret"}/>
        </Combo>
    )
}

const layerNames = ["Default", "0", "図面枠", "寸法", "Defpoints", "外形線", "テキスト", "中心線", "かくれ線", "ハッチング", "シンボル"];

const outline = [
    "M346 320L311 317 304 367 339 371",
    "M346.500 315.500H354.500L365 324.500 407 329M346.500 315.500L339.500 376.500 347 377.500 358 371.500 401 376",
    "M354.500 315.500L347 377.500M364 325L358 371.500",
    "M407 329L419 316.500 541 330 548 342.500ZM401 376L410 390 530 403.500 543 391Z",
    "M407 329L401 376M419 317L410 390M540.500 330L530.500 403M548.500 343L543.500 391",
    "M466.500 322L473 397.500H483L477 322.500ZM472 322.500L478 397.500",
    "M548.500 344L592 349 602.500 342.500 611 343.500 603.500 404H595L585.500 395 543 391",
    "M592 349L585.500 395M602.500 342.500L595 404",
    "M610 349.500L645.500 353 639.500 402.500 603.500 399.500",
    "M645.500 355L680.500 359 675.500 404.500 639.500 401.500",
    "M680.500 362.500L791.500 375M675.500 401.500L786.500 412.500 801 307 726 299C719 298 719 289 726 288.500L802 296.500 805 281",
    "M911.500 387.500V391L925 392.500 926.500 389C952 398 943 426 916 426.500C882 426 884 392 911.500 387.500",
];

const centres = [
    "M292 340.500L797 394.500",
    "M407 321.500L549 337M399 382.500L541 398",
    "M714 292.500L811 302.500M711 368.500L791 378",
    "M880 403.500L950 410.500M919.500 381L912.500 433",
];

// the view box keeps the model's own coordinates
function Model() {
    return (
        <Scene width="772" height="432" viewBox="230 180 772 432">
            <g fill="none" stroke="#33265f" shapeRendering="crispEdges">
                {outline.map(d => <path key={d} d={d}/>)}
                {centres.map(d => <path key={d} d={d} strokeDasharray="14 4 2 4"/>)}
            </g>
            <path d="M269 490L271 464" stroke="#10b520" strokeWidth="2"/>
            <path d="M272 457L274 471H268Z" fill="#10a820"/>
            <path d="M267 490L268 472" stroke="#0b0b8c" strokeWidth="3"/>
            <path d="M268.500 462L272 474H265Z" fill="#0b0b8c"/>
            <path d="M270 493L301 496" stroke="#d01010" strokeWidth="3"/>
            <path d="M312 497L299 493V500Z" fill="#d01010"/>
            <circle cx="266.500" cy="492.500" r="5" fill="#d8cc16"/>
            <circle cx="265" cy="491" r="2" fill="#fff785"/>
            <g fill="none">
                <path d="M319 494L327 504M327 494L319 504" stroke="#e02020"/>
                <path d="M265.500 450.500H271L265.500 459.500H271" stroke="#2020e0"/>
                <path d="M268.500 444L272.500 449V454M276.500 444L272.500 449" stroke="#20d020"/>
            </g>
            <path d="M917 509.500L966.500 514.500 964 552.500 909.500 546.500Z" fill="#fff" stroke="#a5a5a5"/>
            <path d="M909.500 546.500L964 552.500 959 583.500 910.500 578.500Z" fill="#e2e4e4" stroke="#a5a5a5"/>
            <g fontFamily="DejaVu Sans" fontSize="9" textAnchor="middle" fill="#555">
                <text x="939" y="533" transform="rotate(5 939 530)">TOP</text>
                <text x="936" y="569" transform="rotate(5 936 566)">FRONT</text>
            </g>
            <path d="M938.500 546L939.500 533" stroke="#6c8ee0" strokeWidth="1.500"/>
            <circle cx="939.500" cy="532.500" r="2" fill="#445a78"/>
            <path d="M940 547L958 549" stroke="#f08a8a"/>
            <path d="M963 549.500L956 547V551Z" fill="#f08a8a"/>
            <circle cx="938" cy="547" r="2.500" fill="#e2cf29"/>
            <path d="M892.500 567.500V587L897 583 900.500 591 904 589.500 900 581.500H905.500Z" fill="#e5f3f8" stroke="#666"/>
            <rect x="907" y="586" width="8" height="8" fill="#f8cf5a" stroke="#a85a10" strokeWidth="1.500"/>
        </Scene>
    )
}

function App() {
    const [planes, setPlanes] = useState([
        { id: "csys", text: "座標系", on: true },
        { id: "plane", text: "基準平面", on: false },
        { id: "sketch", text: "スケッチ", on: true },
    ])
    const [zoom, setZoom] = useState(43);

    const toggle = (id) => {
        setPlanes(planes.map(p => p.id === id ? { ...p, on: !p.on } : p))
    }

    return (
        <>
            <GlobalStyle/>
            <Window>
                <Header>
                    <AppButton type="button" aria-label="Application menu"><Icon name="logo" size={28} box={32}/></AppButton>
                    <HeaderRows>
                        <TitleRow>
                            <Btn name="doc" w={20}/><Btn name="caret" w={14}/>
                            <Divider/>
                            <Btn name="open" w={24}/><Btn name="pinBlue" w={24} size={14}/>
                            <Divider/>
                            <Btn name="save" w={26}/><Btn name="copy" w={22}/><Btn name="caret" w={12}/>
                            <Divider/>
                            <Btn name="list" w={26}/><Btn name="picture" w={22}/><Btn name="caret" w={10}/>
                            <Divider/>
                            <Btn name="door" w={28}/><Btn name="overflow" w={30} size={14}/>
                            <Title>Solid Edge 2D Drafting 2021 - AssemblyViewer - [no041]</Title>
                            <Btn name="min" w={29}/><Btn name="max" w={29}/><Btn name="close" w={29}/>
                        </TitleRow>
                        <TabRow>
                            <RibbonTab type="button" $active>ホーム</RibbonTab>
                            <RibbonTab type="button">表示</RibbonTab>
                            <Brand>SIEMENS</Brand>
                            <Btn name="cascade" size={14}/><Btn name="windows" size={14}/><Btn name="help" size={14}/>
                            <Btn name="minSm" w={14} size={14}/><Btn name="restore" w={18} size={14}/><Btn name="closeSm" w={16} size={12}/>
                        </TabRow>
                    </HeaderRows>
                </Header>

                <Ribbon>
                    <Group $w={136} $pad={8}>
                        <GroupBody>
                            <BigButton type="button" $w={42} $on>
                                <Icon name="arrow" size={34} box={34}/>
                                <span>選択</span>
                                <Icon name="caret" size={12}/>
                            </BigButton>
                            <IconGrid $cols="23px 23px 12px 22px">
                                <Btn name="filter"/><Btn name="pickBox"/><span/><Btn name="findPart" w={22}/>
                                <Btn name="boxesH"/><Btn name="boxesV"/><span/><span/>
                                <Btn name="pickBack"/><Btn name="chain"/><Btn name="caret" w={12} size={14}/>
                            </IconGrid>
                        </GroupBody>
                        <GroupLabel $pull={8}>選択</GroupLabel>
                    </Group>
                    <Group $w={141}>
                        <GroupBody $center><Select label="表示構成" width={130} value="" dim/></GroupBody>
                        <GroupLabel>表示構成</GroupLabel>
                    </Group>
                    <Group $w={34}>
                        <GroupBody $center>
                            <IconGrid $cols="23px">
                                <Btn name="gridRed"/><Btn name="warnArrow"/><Btn name="warnSave"/>
                            </IconGrid>
                        </GroupBody>
                        <GroupLabel>モード</GroupLabel>
                    </Group>
                    <Group $w={65}>
                        <GroupBody $center>
                            <BigButton type="button" $w={62}>
                                <Icon name="smart" size={34} box={34}/>
                                <span>Smart<br/>Measure</span>
                            </BigButton>
                        </GroupBody>
                        <GroupLabel>2D計測</GroupLabel>
                    </Group>
                    <Group $w={100} $pad={4}>
                        <GroupBody>
                            <BigButton type="button" $w={45}>
                                <Icon name="measure" size={34} box={34}/>
                                <span>計測</span>
                            </BigButton>
                            <IconGrid $cols="23px 23px">
                                <Btn name="rulerDots"/><Btn name="angle"/>
                                <Btn name="rulerArrow"/><Btn name="whatsThis"/>
                                <Btn name="rulerL"/>
                            </IconGrid>
                        </GroupBody>
                        <GroupLabel $pull={4}>3D計測</GroupLabel>
                    </Group>
                    <Group $w={166} $pad={6}>
                        <GroupBody>
                            <BigButton type="button" $w={42}>
                                <Icon name="zoomBig" size={34} box={34}/>
                                <span>領域<br/>の拡大</span>
                            </BigButton>
                            <BigButton type="button" $w={44}>
                                <Icon name="fitBig" size={34} box={34}/>
                                <span>フィット</span>
                            </BigButton>
                            <IconGrid $cols="23px 23px 23px">
                                <Btn name="zoomPm"/><Btn name="orient"/><Btn name="swapWin"/>
                                <Btn name="hand"/><Btn name="spin"/><Btn name="cubeGray"/>
                                <Btn name="recycle"/><Btn name="sketchBox"/><Btn name="pickSet"/>
                            </IconGrid>
                        </GroupBody>
                        <GroupLabel $pull={6}>向き</GroupLabel>
                    </Group>
                    <Group $w={105} $pad={6}>
                        <GroupBody>
                            <ViewGrid>
                                {["wire", "wireGray", "wireFront", "solid", "solidEdge"].map(v => (
                                    <ViewButton key={v} type="button" aria-label={v} $on={v === "solidEdge"}>
                                        <Icon name={v} size={20} box={20}/>
                                    </ViewButton>
                                ))}
                            </ViewGrid>
                        </GroupBody>
                    </Group>
                    <Group $w={148} $pad={3}>
                        <GroupBody>
                            <StyleColumn>
                                <StyleName><Icon name="styleA" size={15}/>スタイル</StyleName>
                                <Select label="スタイル" width={140} value=""/>
                                <Select label="下位スタイル" width={140} value="(None)" dim/>
                            </StyleColumn>
                        </GroupBody>
                        <GroupLabel $left>スタイル</GroupLabel>
                    </Group>
                </Ribbon>

                <Workspace>
                    <SidePanel>
                        <PanelTitle>
                            <Icon name="layers" size={18}/>
                            <b>レイヤ</b>
                            <Btn name="menu" w={17} h={16} size={15}/><Btn name="pin" w={17} h={16} size={15}/><Btn name="closeSm" w={17} h={16} size={14}/>
                        </PanelTitle>
                        <PanelTabs>
                            <PanelTab type="button" aria-label="parts" $first><Icon name="blocks" size={18}/></PanelTab>
                            {["folderQ", "gauge", "balls", "shade", "wrench", "layers"].map(t => (
                                <PanelTab key={t} type="button" aria-label={t} $active={t === "layers"}><Icon name={t} size={18}/></PanelTab>
                            ))}
                            <Btn name="left" w={17} h={26} size={14}/><Btn name="right" w={12} h={26} size={14}/>
                        </PanelTabs>
                        <PanelTools>
                            <ToolButton type="button" aria-label="new" $gap={12}><Icon name="newLayer"/></ToolButton>
                            <ToolButton type="button" aria-label="move" $gap={4}><Icon name="moveLayer"/></ToolButton>
                            <ToolButton type="button" aria-label="show" $gap={12}><Icon name="showLayer"/></ToolButton>
                            <ToolButton type="button" aria-label="order" $gap={12} $off><Icon name="orderLayer"/></ToolButton>
                            <ToolButton type="button" aria-label="remove" $gap={0}><Icon name="dropLayer"/></ToolButton>
                        </PanelTools>
                        <Tree>
                            <li>
                                <TreeRow>
                                    <Expander type="button" aria-label="collapse"><Icon name="minus" size={7}/></Expander>
                                    <svg width="5" height="2"><path d="M0 1H5" stroke="#808080" strokeDasharray="1 1"/></svg>
                                    <Icon name="stack" size={17}/>レイヤ
                                </TreeRow>
                                <ul>
                                    {layerNames.map((name, i) => (
                                        <TreeLeaf key={name} $bold={i === 0}>
                                            <Icon name={i === 0 ? "sheetPen" : "sheet"} size={17}/>{name}
                                        </TreeLeaf>
                                    ))}
                                </ul>
                            </li>
                        </Tree>
                    </SidePanel>

                    <Main>
                        <DocTabs>
                            <DocTab>
                                <Icon name="asmDoc"/>
                                <span>no041</span>
                                <Btn name="closeTab" w={14} size={14}/>
                            </DocTab>
                            <DocTools>
                                <Btn name="prev" w={15} size={14}/><Btn name="next" w={13} size={14}/><Btn name="caret" w={13}/><Btn name="close" w={16} size={14}/>
                            </DocTools>
                        </DocTabs>
                        <Canvas>
                            <Model/>
                            <Splitter>
                                <svg width="40" height="2"><path d="M0 1H40" stroke="#3e6bb0" strokeWidth="2" strokeDasharray="2 2"/></svg>
                            </Splitter>
                            <PathFinder>
                                <PathRow $root>
                                    <PathLabel as="div"><Icon name="asm" size={14}/><Icon name="lock" size={14}/>no041</PathLabel>
                                </PathRow>
                                {planes.map(p => (
                                    <PathRow key={p.id}>
                                        <Expander type="button" aria-label="expand"><Icon name="plus" size={7}/></Expander>
                                        <Check>
                                            <input type="checkbox" id={p.id} checked={p.on} onChange={() => toggle(p.id)}/>
                                            {p.on && <Icon name="tick" size={13}/>}
                                        </Check>
                                        <PathLabel htmlFor={p.id} $off={!p.on}><Icon name={p.id} size={15}/>{p.text}</PathLabel>
                                    </PathRow>
                                ))}
                            </PathFinder>
                        </Canvas>
                        <PromptBar>
                            <svg width="21" height="10" viewBox="0 0 21 10">{art.solidTag}</svg>
                            <label htmlFor="prompt">プロンプトバー</label>
                            <PromptText id="prompt" readOnly value="[構成要素を挿入]コマンド、[インプレースで作成]コマンド、[パーツライブラリ]タブをクリッ"/>
                            <Spinner type="button" aria-label="scroll"><Icon name="updown"/></Spinner>
                            <Btn name="bigA" w={18}/><Btn name="smallA" w={16}/><Btn name="chevrons" w={14} size={14}/>
                            <Btn name="menu" w={16} size={14}/><Btn name="pin" w={17} size={15}/><Btn name="closeSm" w={16} size={13}/>
                        </PromptBar>
                    </Main>
                </Workspace>

                <StatusBar>
                    <Search aria-label="search" placeholder="コマンドを検索"/>
                    <Btn name="redo" w={23} h={21}/>
                    {["zoomArea", "zoomPm", "fit", "hand", "recycle", "turn", "sheetsIn", "overlap", "pickSet"].map(n => (
                        <Btn key={n} name={n} w={22} h={21} size={15}/>
                    ))}
                    <Btn name="zoomOut" w={21} h={21}/>
                    <Zoom type="range" aria-label="zoom" value={zoom} onChange={(e) => setZoom(e.target.value)}/>
                    <Btn name="zoomIn" w={20} h={21}/>
                    <Btn name="video" w={22} h={21} size={15}/><Btn name="record" w={25} h={21}/><Btn name="upload" w={24} h={21}/><Btn name="grip" w={18} h={21} size={14}/>
                </StatusBar>
            </Window>
        </>
    )
}

export default App;
